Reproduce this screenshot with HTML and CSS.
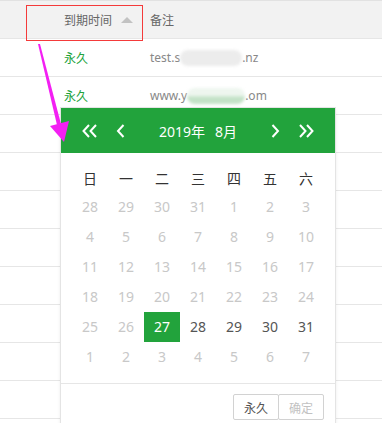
FILE: index.html
```html
<!DOCTYPE html>
<html lang="zh-CN">
<head>
  <meta charset="UTF-8">
  <meta name="viewport" content="width=device-width, initial-scale=1.0">
  <title>到期时间</title>
  <link rel="stylesheet" href="styles.css">
</head>
<body>
<div class="page">

  <!-- table -->
  <div class="grid">
    <div class="row head">
      <div class="cell"></div>
      <div class="cell">到期时间<span class="sort"></span></div>
      <div class="cell">备注</div>
    </div>
    <div class="row">
      <div class="cell"></div>
      <div class="cell forever">永久</div>
      <div class="cell note">test.s<span class="blur"></span>.nz</div>
    </div>
    <div class="row">
      <div class="cell"></div>
      <div class="cell forever">永久</div>
      <div class="cell note">www.y<span class="blur green"></span>.om</div>
    </div>
    <div class="row"></div>
    <div class="row"></div>
    <div class="row"></div>
    <div class="row"></div>
    <div class="row"></div>
    <div class="row"></div>
    <div class="row"></div>
    <div class="row"></div>
  </div>

  <!-- date picker -->
  <div class="laydate">
    <div class="ld-head">
      <svg class="nav dbl" width="16" height="14" viewBox="0 0 16 14"><polyline points="7,1 1.5,7 7,13"/><polyline points="14,1 8.5,7 14,13"/></svg>
      <svg class="nav sgl" width="9" height="14" viewBox="0 0 9 14"><polyline points="7.5,1 2,7 7.5,13"/></svg>
      <div class="ym"><span>2019年</span><span class="month">8月</span></div>
      <svg class="nav sgl" width="9" height="14" viewBox="0 0 9 14"><polyline points="1.5,1 7,7 1.5,13"/></svg>
      <svg class="nav dbl" width="16" height="14" viewBox="0 0 16 14"><polyline points="2,1 7.5,7 2,13"/><polyline points="9,1 14.5,7 9,13"/></svg>
    </div>
    <div class="ld-body">
      <div class="week">
        <span>日</span><span>一</span><span>二</span><span>三</span><span>四</span><span>五</span><span>六</span>
      </div>
      <div class="days">
        <span>28</span><span>29</span><span>30</span><span>31</span><span>1</span><span>2</span><span>3</span>
        <span>4</span><span>5</span><span>6</span><span>7</span><span>8</span><span>9</span><span>10</span>
        <span>11</span><span>12</span><span>13</span><span>14</span><span>15</span><span>16</span><span>17</span>
        <span>18</span><span>19</span><span>20</span><span>21</span><span>22</span><span>23</span><span>24</span>
        <span>25</span><span>26</span><span class="on">27</span><span class="ok">28</span><span class="ok">29</span><span class="ok">30</span><span class="ok">31</span>
        <span>1</span><span>2</span><span>3</span><span>4</span><span>5</span><span>6</span><span>7</span>
      </div>
    </div>
    <div class="ld-foot">
      <button class="btn">永久</button><button class="btn off">确定</button>
    </div>
  </div>

  <!-- annotations -->
  <div class="mark"></div>
  <svg class="pointer" width="382" height="423" viewBox="0 0 382 423">
    <polygon points="38,44 40,44 61,124 57,125" />
    <polygon points="50,126 69,121 64,142" />
  </svg>

</div>
</body>
</html>
```

FILE: styles.css
```css
body {
  margin: 0;
  background-color: #fff;
  font-family: "Noto Sans", "Noto Sans CJK SC", sans-serif;
}

.page {
  position: relative;
  width: 382px;
  height: 423px;
  overflow: hidden;
}

/* table */
.grid {
  border-top: 1px solid #e2e2e2;
}

.row {
  display: grid;
  grid-template-columns: 49px 86px 1fr;
  align-items: center;
  height: 37px;
  border-bottom: 1px solid #e6e6e6;
  font-size: 12px;
  color: #666;
}

.row.head {
  background-color: #f2f2f2;
}

.cell {
  padding-left: 15px;
  white-space: nowrap;
}

.cell:first-child {
  padding-left: 0;
}

.sort {
  display: inline-block;
  width: 0;
  height: 0;
  margin-left: 9px;
  vertical-align: 2px;
  border-left: 6px solid transparent;
  border-right: 6px solid transparent;
  border-bottom: 6px solid #c2c2c2;
}

.forever {
  color: #22a33c;
}

.note {
  color: #888;
}

.blur {
  display: inline-block;
  width: 62px;
  height: 16px;
  vertical-align: -4px;
  border-radius: 8px;
  background-color: #ececec;
  filter: blur(1.5px);
}

.blur.green {
  width: 58px;
  background: linear-gradient(#eef6ef 0%, #eef6ef 45%, #c3e2c7 60%, #c3e2c7 100%);
}

/* date picker */
.laydate {
  position: absolute;
  left: 61px;
  top: 108px;
  width: 274px;
  background-color: #fff;
  box-shadow: 0 0 0 1px #e4e4e4, 0 2px 4px rgba(0, 0, 0, 0.12);
  font-size: 14px;
}

.ld-head {
  display: flex;
  align-items: center;
  height: 45px;
  padding: 0 21px 0 21px;
  background-color: #22a33c;
  color: #fff;
}

.nav {
  fill: none;
  stroke: #fff;
  stroke-width: 2;
}

.nav.dbl + .nav.sgl {
  margin-left: 18px;
}

.nav.sgl + .nav.dbl {
  margin-left: 18px;
}

.ym {
  flex: 1;
  text-align: center;
}

.month {
  margin-left: 10px;
}

.ld-body {
  padding: 13px 11px 11px;
  border-bottom: 1px solid #e6e6e6;
}

.week,
.days {
  display: grid;
  grid-template-columns: repeat(7, 36px);
  text-align: center;
}

.week span {
  height: 26px;
  line-height: 26px;
  color: #333;
}

.days span {
  height: 30px;
  line-height: 30px;
  color: #c8c8c8;
}

.days span.ok {
  color: #555;
}

.days span.on {
  background-color: #22a33c;
  color: #fff;
}

.ld-foot {
  display: flex;
  justify-content: flex-end;
  padding: 10px 11px 10px;
}

.btn {
  width: 46px;
  height: 26px;
  padding: 0;
  background-color: #fff;
  border: 1px solid #d2d2d2;
  border-radius: 2px;
  font-family: "Noto Sans CJK SC", sans-serif;
  font-size: 12px;
  color: #555;
}

.btn.off {
  margin-left: -1px;
  color: #c2c2c2;
}

/* annotations */
.mark {
  position: absolute;
  left: 26px;
  top: 5px;
  width: 115px;
  height: 34px;
  border: 1px solid #f43a3a;
}

.pointer {
  position: absolute;
  left: 0;
  top: 0;
  fill: #f31ff3;
}
```
